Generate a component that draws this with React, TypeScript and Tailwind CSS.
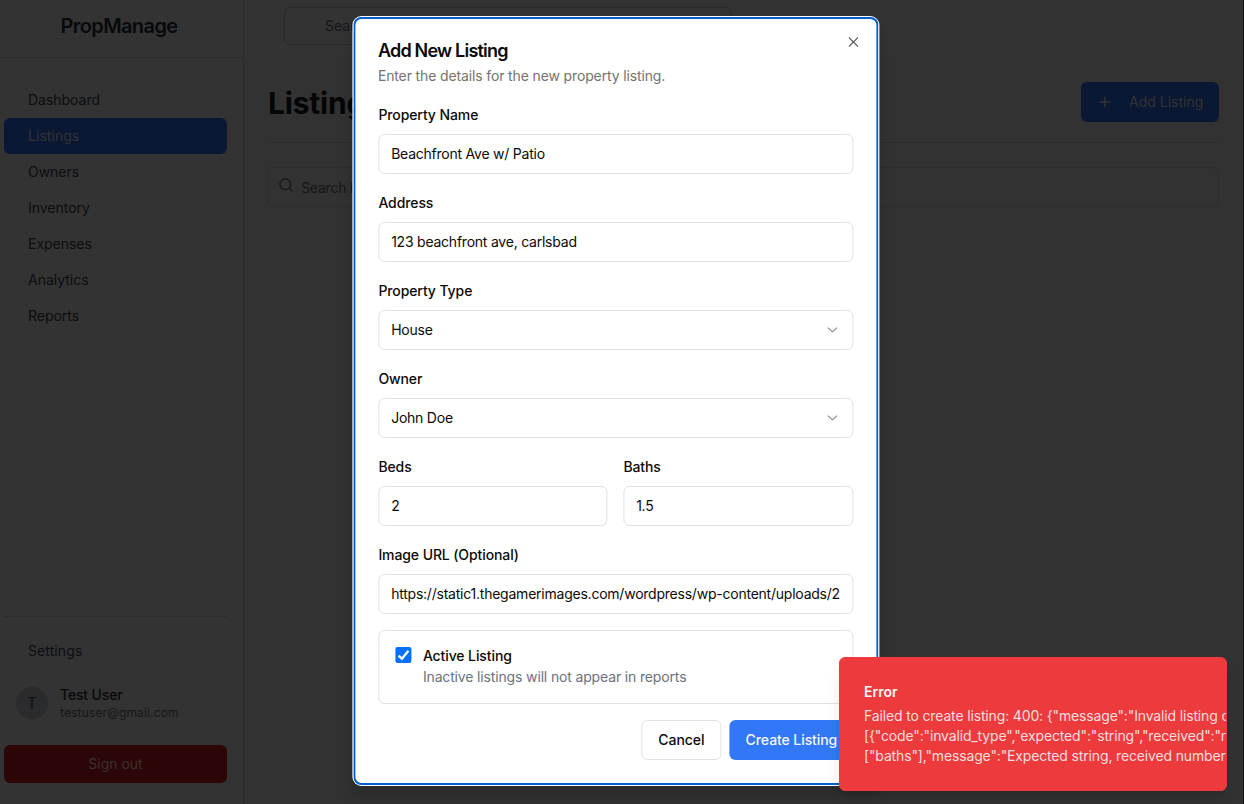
import React from "react";
import { Plus, Search } from "lucide-react";

const navItems = ["Dashboard", "Listings", "Owners", "Inventory", "Expenses", "Analytics", "Reports"];

function Sidebar() {
  return (
    <aside className="flex h-full w-[244px] shrink-0 flex-col border-r border-[#2b2b2c] bg-[#333333]">
      <div className="flex h-[58px] shrink-0 items-start justify-center border-b border-[#2b2b2c] pt-[11px] pr-[5px] text-[20px] leading-[30px] font-semibold tracking-[-0.6px] text-[#08090c]">
        PropManage
      </div>
      <nav className="mt-6 flex flex-col pr-4 pl-1">
        {navItems.map((item) => (
          <a
            key={item}
            className={
              item === "Listings"
                ? "flex h-9 items-center rounded-md bg-[#0a1833] pl-6 text-sm tracking-[0.05px] text-[#333333]"
                : "flex h-9 items-center rounded-md pl-6 text-sm tracking-[-0.02px] text-[#0c0e11]"
            }
          >
            {item}
          </a>
        ))}
      </nav>
      <div className="mt-auto mr-4 ml-1 flex h-[188px] flex-col border-t border-[#2b2b2c]">
        <a className="mt-4 flex h-9 items-center pl-6 text-sm tracking-[0.1px] text-[#0c0e11]">Settings</a>
        <div className="mt-[18px] flex h-8 items-center gap-3 pl-3">
          <div className="flex size-8 items-center justify-center rounded-full bg-[#2a2b2d] text-base text-[#0f1216]">T</div>
          <div className="pt-px">
            <div className="text-sm leading-[18px] font-medium tracking-[-0.15px] text-[#08090c]">Test User</div>
            <div className="pt-px text-xs leading-4 tracking-[0.15px] text-[#15171a]">testuser@gmail.com</div>
          </div>
        </div>
        <button className="mt-[26px] h-[38px] shrink-0 rounded-md bg-[#2c0606] text-sm text-[#3a3030]">Sign out</button>
      </div>
    </aside>
  );
}

function Main() {
  return (
    <main className="flex min-w-0 flex-1 flex-col">
      <header className="flex h-[59px] shrink-0 bg-[#333333] pt-[7px] pl-10">
        <div className="flex h-[38px] w-[448px] items-center rounded-md border border-[#2a2a2c] pl-10 text-sm text-[#15171b]">
          Search...
        </div>
      </header>
      <div className="flex flex-col pt-[23px] pr-6 pl-6">
        <div className="flex h-[61px] items-start justify-between border-b border-[#2c2c2c]">
          <h1 className="text-[30px] leading-[42px] font-bold tracking-[-0.2px] text-[#030507]">Listings</h1>
          <button className="flex h-10 w-[138px] items-center rounded-md bg-[#0a1833] pl-4 text-sm text-[#333333]">
            <Plus size={16} className="mr-4" />
            Add Listing
          </button>
        </div>
        <div className="mt-6 -ml-px flex h-10 items-center gap-[7px] rounded-md border border-[#2d2d2e] pl-[10px] text-sm text-[#161719]">
          <Search size={16} className="-mt-1" />
          <span className="pt-[2px] tracking-[-0.2px]">Search listings...</span>
        </div>
      </div>
    </main>
  );
}

function Chevron() {
  return (
    <svg viewBox="0 0 15 15" className="-mt-[2px] size-4 shrink-0 fill-[#0c0a09] opacity-50">
      <path
        fillRule="evenodd"
        clipRule="evenodd"
        d="M3.13523 6.15803C3.3241 5.95657 3.64052 5.94637 3.84197 6.13523L7.5 9.56464L11.158 6.13523C11.3595 5.94637 11.6759 5.95657 11.8648 6.15803C12.0536 6.35949 12.0434 6.67591 11.842 6.86477L7.84197 10.6148C7.64964 10.7951 7.35036 10.7951 7.15803 10.6148L3.15803 6.86477C2.95657 6.67591 2.94637 6.35949 3.13523 6.15803Z"
      />
    </svg>
  );
}

function Cross() {
  return (
    <svg viewBox="0 0 15 15" className="absolute top-[17px] right-[17px] size-4 fill-[#0c0a09] opacity-70">
      <path
        fillRule="evenodd"
        clipRule="evenodd"
        d="M11.7816 4.03157C12.0062 3.80702 12.0062 3.44295 11.7816 3.2184C11.5571 2.99385 11.193 2.99385 10.9685 3.2184L7.50005 6.68682L4.03164 3.2184C3.80708 2.99385 3.44301 2.99385 3.21846 3.2184C2.99391 3.44295 2.99391 3.80702 3.21846 4.03157L6.68688 7.49999L3.21846 10.9684C2.99391 11.193 2.99391 11.557 3.21846 11.7816C3.44301 12.0061 3.80708 12.0061 4.03164 11.7816L7.50005 8.31316L10.9685 11.7816C11.193 12.0061 11.5571 12.0061 11.7816 11.7816C12.0062 11.557 12.0062 11.193 11.7816 10.9684L8.31322 7.49999L11.7816 4.03157Z"
      />
    </svg>
  );
}

function Field({ label, value, select }: { label: string; value: string; select?: boolean }) {
  return (
    <label className="flex min-w-0 flex-1 flex-col text-sm font-medium text-[#0c0a09]">
      <span className="mb-[7px] pt-px leading-6 tracking-[-0.1px]">{label}</span>
      <span className="flex h-10 w-full items-center justify-between rounded-md border border-[#e1e1e2] bg-white pr-3 pl-[11.75px] font-normal">
        <span className="whitespace-nowrap tracking-[-0.23px]">{value}</span>
        {select && <Chevron />}
      </span>
    </label>
  );
}

function Dialog() {
  return (
    <div
      role="dialog"
      className="absolute top-[17px] left-[353px] h-[768px] w-[525px] translate-x-[0.4px] rounded-lg bg-white px-[25px] pt-[21px] shadow-[0_0_0_1px_#fff,inset_0_0_0_2px_#005fd0,0_10px_15px_2px_rgba(0,0,0,0.15)]"
    >
      <Cross />
      <h2 className="-ml-[0.5px] text-lg leading-[25px] font-semibold tracking-[-0.79px] text-[#0c0a09]">Add New Listing</h2>
      <p className="mt-[3px] -ml-[0.5px] text-sm leading-5 tracking-[-0.135px] text-[#78716c]">
        Enter the details for the new property listing.
      </p>
      <div className="mt-4 flex flex-col gap-4">
        <Field label="Property Name" value="Beachfront Ave w/ Patio" />
        <Field label="Address" value="123 beachfront ave, carlsbad" />
        <Field label="Property Type" value="House" select />
        <Field label="Owner" value="John Doe" select />
        <div className="grid grid-cols-[229px_230px] gap-4">
          <Field label="Beds" value="2" />
          <Field label="Baths" value="1.5" />
        </div>
        <Field label="Image URL (Optional)" value="https://static1.thegamerimages.com/wordpress/wp-content/uploads/2" />
        <div className="flex h-[74px] items-start rounded-md border border-[#e1e1e2] p-4">
          <span className="flex size-4 items-center justify-center rounded-[2px] bg-[#0071ff]">
            <svg viewBox="0 0 16 16" className="size-4" fill="none" stroke="#fff" strokeWidth="2.3">
              <path d="M3.2 8.6 6.5 11.8 13 3.7" />
            </svg>
          </span>
          <div className="ml-[11.5px]">
            <div className="text-sm leading-[18px] font-medium tracking-[-0.1px] text-[#0c0a09]">Active Listing</div>
            <div className="mt-[2px] text-sm leading-5 tracking-[-0.15px] text-[#6b7280]">Inactive listings will not appear in reports</div>
          </div>
        </div>
      </div>
      <div className="mt-4 flex justify-end gap-2 text-sm font-medium">
        <button className="h-10 w-20 rounded-md border border-[#e1e1e2] tracking-[-0.06px] text-[#0c0a09]">Cancel</button>
        <button className="h-10 w-[124px] rounded-md bg-[#3278f6] tracking-[-0.08px] text-[#f3f7fd]">Create Listing</button>
      </div>
    </div>
  );
}

function Toast() {
  return (
    <div className="absolute top-[657px] left-[839px] h-[134px] w-[388px] overflow-hidden rounded-md border border-[#ed3b3d] bg-[#ed3b3d] pt-6 pl-6 text-sm text-[#fafafa] shadow-lg">
      <div className="leading-5 font-semibold">Error</div>
      <div className="mt-1 leading-5 tracking-[-0.15px] whitespace-nowrap text-[#f9dddd]">
        <div>{'Failed to create listing: 400: {"message":"Invalid listing data","errors":'}</div>
        <div>{'[{"code":"invalid_type","expected":"string","received":"number","path":'}</div>
        <div>{'["baths"],"message":"Expected string, received number"}]}'}</div>
      </div>
    </div>
  );
}

export default function App() {
  return (
    <div className="relative flex h-[804px] w-[1244px] overflow-hidden border-r border-[#0c0c0d] bg-[#323232] font-['Inter',sans-serif]">
      <Sidebar />
      <Main />
      <Dialog />
      <Toast />
    </div>
  );
}
